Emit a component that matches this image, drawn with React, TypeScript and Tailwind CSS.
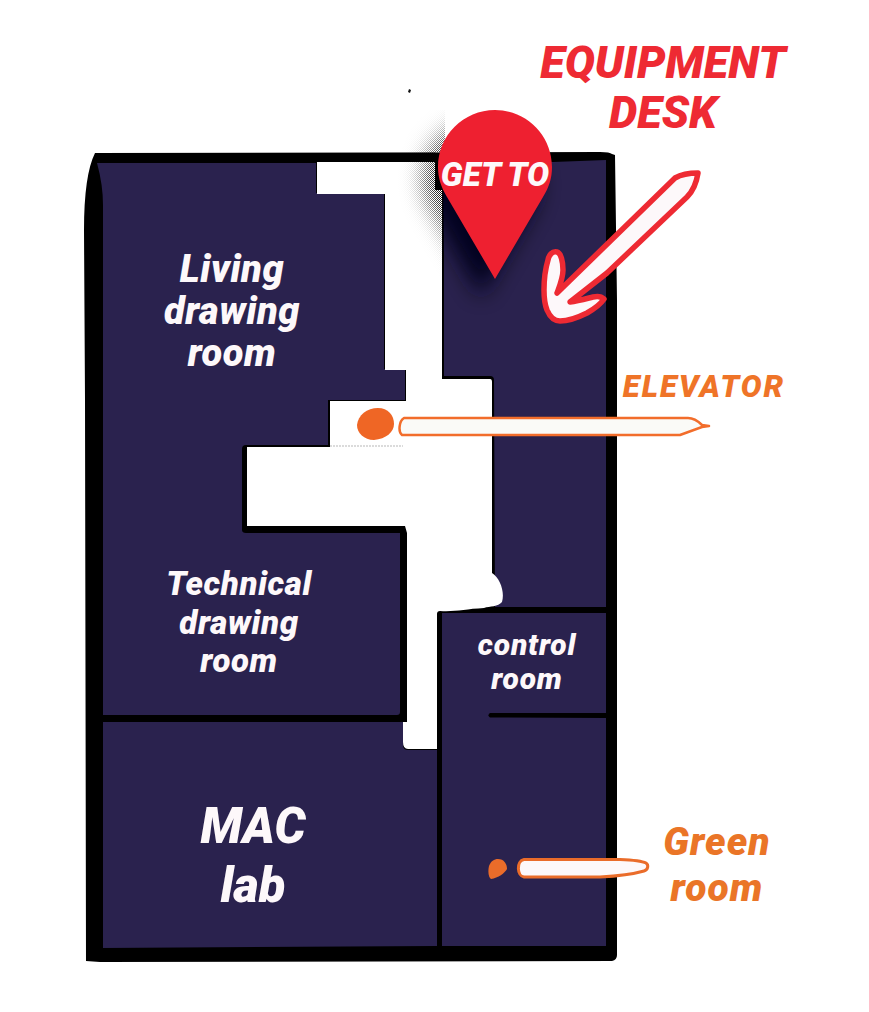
import React from "react";

const PIN = "M495 279 L447 197 C441 187 438 178 438 167 C438 135.5 463.5 110 495 110 C526.5 110 552 135.5 552 167 C552 178 549 187 543 197 Z";

function FloorPlan() {
  return (
    <svg className="absolute inset-0" width={869} height={1012} viewBox="0 0 869 1012">
      <defs>
        <filter id="pinShadow" x="-60%" y="-60%" width="220%" height="220%">
          <feGaussianBlur stdDeviation="11" />
        </filter>
        <pattern id="dither" width="2" height="2" patternUnits="userSpaceOnUse">
          <rect width="1" height="1" fill="#fff" />
          <rect x="1" y="1" width="1" height="1" fill="#fff" />
        </pattern>
        <mask id="ditherMask" maskUnits="userSpaceOnUse" x="380" y="100" width="70" height="180">
          <rect x="380" y="100" width="70" height="180" fill="url(#dither)" />
        </mask>
        <clipPath id="navyClip">
          <rect x="443" y="163" width="163" height="213" />
        </clipPath>
        <clipPath id="whiteClip">
          <path d="M385 110 L445 110 L445 152 L435 152 L435 190 L442 190 L442 300 L385 300 Z" />
        </clipPath>
      </defs>
      {/* outer walls */}
      <path d="M95 153 L600 152 Q610 152 612 154 L615 155 L617 300 L617 955 Q617 960 612 961 L100 962 L86 961 L85 400 L84 230 Q84 175 95 153 Z" fill="#000" />
      {/* rooms */}
      <g fill="#2a224e">
        <path d="M97 163 L316 163 L316 193 L384 193 L384 369 L405 369 L405 400 L328 400 L328 445 L246 445 Q242 445 242 449 L242 530 Q242 533 246 533 L400 533 L400 712 Q400 715 397 715 L103 715 L103 205 Q103 185 97 163 Z" />
        <path d="M444 163 L553 162 L606 160 L606 607 L495 607 L494 380 Q494 376 490 376 L444 376 Z" />
        <path d="M442 613 L606 613 L606 946 L442 946 Z" />
        <path d="M103 722 L403 722 L403 745 Q403 750 408 750 L437 750 L437 946 L103 948 Z" />
      </g>
      {/* corridor */}
      <path
        d="M317 162 L435 162 L435 190 L442 190 L442 379 L490 379 Q492 379 492 382 L492 573 C500 578 505 592 502 602 C498 607 490 606 484 608 C465 609 455 612 440 611 Q437 611 437 614 L437 749 L408 749 Q403 749 403 742 L403 722 L407 722 L407 533 L405 526 L247 526 L247 447 L330 447 L330 401 L406 401 L406 370 L385 370 L385 194 L317 194 Z"
        fill="#fff"
      />
      <path d="M330 446 L403 446" stroke="#999" strokeWidth={0.7} strokeDasharray="2 1" fill="none" />
      {/* control room divider */}
      <path d="M490 713 L606 713 L606 718 L490 717.5 Q487 715 490 713 Z" fill="#000" />
      {/* speck */}
      <path d="M408 92 L409 89 L411 90 L410 93 Z" fill="#111" />
      {/* pin shadow: halftone on the paper, smooth on the navy */}
      <g clipPath="url(#whiteClip)">
        <g mask="url(#ditherMask)">
          <path d={PIN} transform="translate(-14 12)" fill="#000" filter="url(#pinShadow)" />
        </g>
      </g>
      <g clipPath="url(#navyClip)">
        <path d={PIN} transform="translate(-14 18)" fill="#02001a" opacity={0.95} filter="url(#pinShadow)" />
      </g>
      <path d={PIN} fill="#ee2030" />
      {/* red arrow */}
      <path
        d="M698 173 C690 173 682 174 675 178 L557 293 C560 285 563 278 563 270 C563 262 561 253 557 252 C552 251 549 255 548 260 C545 270 544 280 544 290 C544 298 545 305 547 310 C550 317 554 321 560 321 C570 321 579 317 587 313 C594 309 600 305 604 299 C601 296 597 296 593 297 C585 299 578 301 570 302 L607 273 L687 197 C692 192 696 186 698 173 Z"
        fill="#fdf8fa"
        stroke="#ee2a33"
        strokeWidth={5.5}
        strokeLinejoin="round"
      />
      {/* elevator marker */}
      <path d="M378 408 C388 408 394 415 394 424 C394 432 386 439 374 440 C364 440 357 433 357 425 C358 415 367 408 378 408 Z" fill="#ef6625" />
      <path d="M404 418 L688 418 C693 418 697 420 702 425 L709 426 L702 427 L680 435 L402 435 C398 432 399 421 404 418 Z" fill="#fafaf7" stroke="#f26d2b" strokeWidth={2.5} strokeLinejoin="round" />
      {/* green room marker */}
      <path d="M498 859 C504 859 507 864 507 869 C505 873 498 878 491 879 C488 877 488 870 489 866 C491 861 494 859 498 859 Z" fill="#ea6c2a" />
      <path d="M524 859.5 L620 859.5 C632 860 642 861 646 863 C649 865 648 870 644 871 C630 875 620 876 600 877 L524 877 C517 876 516 861 524 859.5 Z" fill="#fdf8fa" stroke="#ea6c2a" strokeWidth={3} />
    </svg>
  );
}

export default function App() {
  return (
    <div className="relative w-[869px] h-[1012px] overflow-hidden bg-white font-['Roboto',sans-serif] font-black italic text-center whitespace-nowrap">
      <FloorPlan />
      <div className="absolute left-[663px] top-[38px] -translate-x-1/2 text-[#ee2a33] text-[45px] leading-[50px]">EQUIPMENT<br />DESK</div>
      <div className="absolute left-[495px] top-[153px] -translate-x-1/2 text-[#fdf8fa] text-[33px] leading-[44px]">GET TO</div>
      <div className="absolute left-[704px] top-[365px] -translate-x-1/2 text-[#ef7428] text-[31px] leading-[44px] tracking-[2px]">ELEVATOR</div>
      <div className="absolute left-[232px] top-[248px] -translate-x-1/2 text-[#fdf8fa] text-[38px] leading-[42px] tracking-[0.5px]">Living<br />drawing<br />room</div>
      <div className="absolute left-[239px] top-[565px] -translate-x-1/2 text-[#fdf8fa] text-[33px] leading-[38.5px] tracking-[0.6px]">Technical<br />drawing<br />room</div>
      <div className="absolute left-[253px] top-[797px] -translate-x-1/2 text-[#fdf8fa] text-[49px] leading-[59px]">MAC<br />lab</div>
      <div className="absolute left-[527px] top-[628px] -translate-x-1/2 text-[#fdf8fa] text-[30px] leading-[34px] tracking-[0.8px]">control<br />room</div>
      <div className="absolute left-[717px] top-[819px] -translate-x-1/2 text-[#ea7527] text-[39px] leading-[46px] tracking-[1px]">Green<br />room</div>
    </div>
  );
}
